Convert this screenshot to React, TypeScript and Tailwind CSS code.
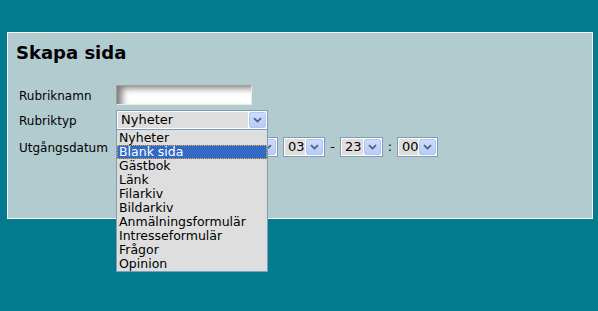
import React from 'react'

const FONT = { fontFamily: '"DejaVu Sans", Verdana, sans-serif' }

const items = [
  'Nyheter',
  'Blank sida',
  'Gästbok',
  'Länk',
  'Filarkiv',
  'Bildarkiv',
  'Anmälningsformulär',
  'Intresseformulär',
  'Frågor',
  'Opinion',
]

function Chevron() {
  return (
    <svg width="9" height="6" viewBox="0 0 9 6" className="block">
      <path d="M1 1.2 L4.5 4.6 L8 1.2" fill="none" stroke="#4d6185" strokeWidth="1.8" />
    </svg>
  )
}

function FakeSelect({ value, width }: { value: string; width: string }) {
  return (
    <div className={`${width} h-[20px] border border-[#7f9db9] bg-white p-px flex items-stretch`}>
      <div className="flex-1 bg-[#dedede] text-[13px] leading-[16px] pl-[3px] text-black overflow-hidden whitespace-nowrap">
        {value}
      </div>
      <div className="w-[17px] ml-px rounded-[2px] border border-[#b3c6f0] bg-gradient-to-b from-[#cddcfd] to-[#b8cbf7] flex items-center justify-center">
        <Chevron />
      </div>
    </div>
  )
}

export default function App() {
  return (
    <div className="w-[598px] h-[311px] bg-[#037a8e] overflow-hidden pt-[32px] pl-[7px]" style={FONT}>
      <div className="w-[586px] h-[187px] border border-white bg-[#b1cbcf] pl-[8px] pt-[9px]">
        <h1 className="text-[18px] leading-[22px] font-bold text-black">Skapa sida</h1>

        <div className="mt-[21px] pl-[3px] text-[12px] text-black">
          <div className="flex items-center h-[20px]">
            <span className="w-[97px] pt-px">Rubriknamn</span>
            <div className="w-[136px] h-[20px] border border-[#a49e8c] border-r-[#eeebe0] border-b-[#eeebe0] bg-white shadow-[inset_7px_4px_7px_-2px_#7a7a7a]" />
          </div>

          <div className="flex items-center h-[20px] mt-[5px] relative">
            <span className="w-[97px] pt-px">Rubriktyp</span>
            <FakeSelect value="Nyheter" width="w-[152px]" />

            {/* open dropdown list */}
            <div className="absolute left-[97px] top-[19px] z-10 w-[152px] border border-[#7f9db9] bg-[#dedede] pt-px">
              {items.map((it, i) => (
                <div
                  key={it}
                  className={`h-[14px] text-[12.5px] whitespace-nowrap ${
                    i === 1
                      ? 'bg-[#316ac5] text-white border border-dotted border-[#e6a33a] pl-px leading-[12px]'
                      : 'text-black pl-[2px] leading-[14px]'
                  }`}
                >
                  {it}
                </div>
              ))}
            </div>
          </div>

          <div className="flex items-center h-[20px] mt-[7px]">
            <span className="w-[97px] pt-px">Utgångsdatum</span>
            <FakeSelect value="" width="w-[162px]" />
            <div className="ml-[5px]">
              <FakeSelect value="03" width="w-[42px]" />
            </div>
            <span className="w-[15px] text-center text-[13px]">-</span>
            <FakeSelect value="23" width="w-[43px]" />
            <span className="w-[14px] text-center text-[13px]">:</span>
            <FakeSelect value="00" width="w-[41px]" />
          </div>
        </div>
      </div>
    </div>
  )
}
